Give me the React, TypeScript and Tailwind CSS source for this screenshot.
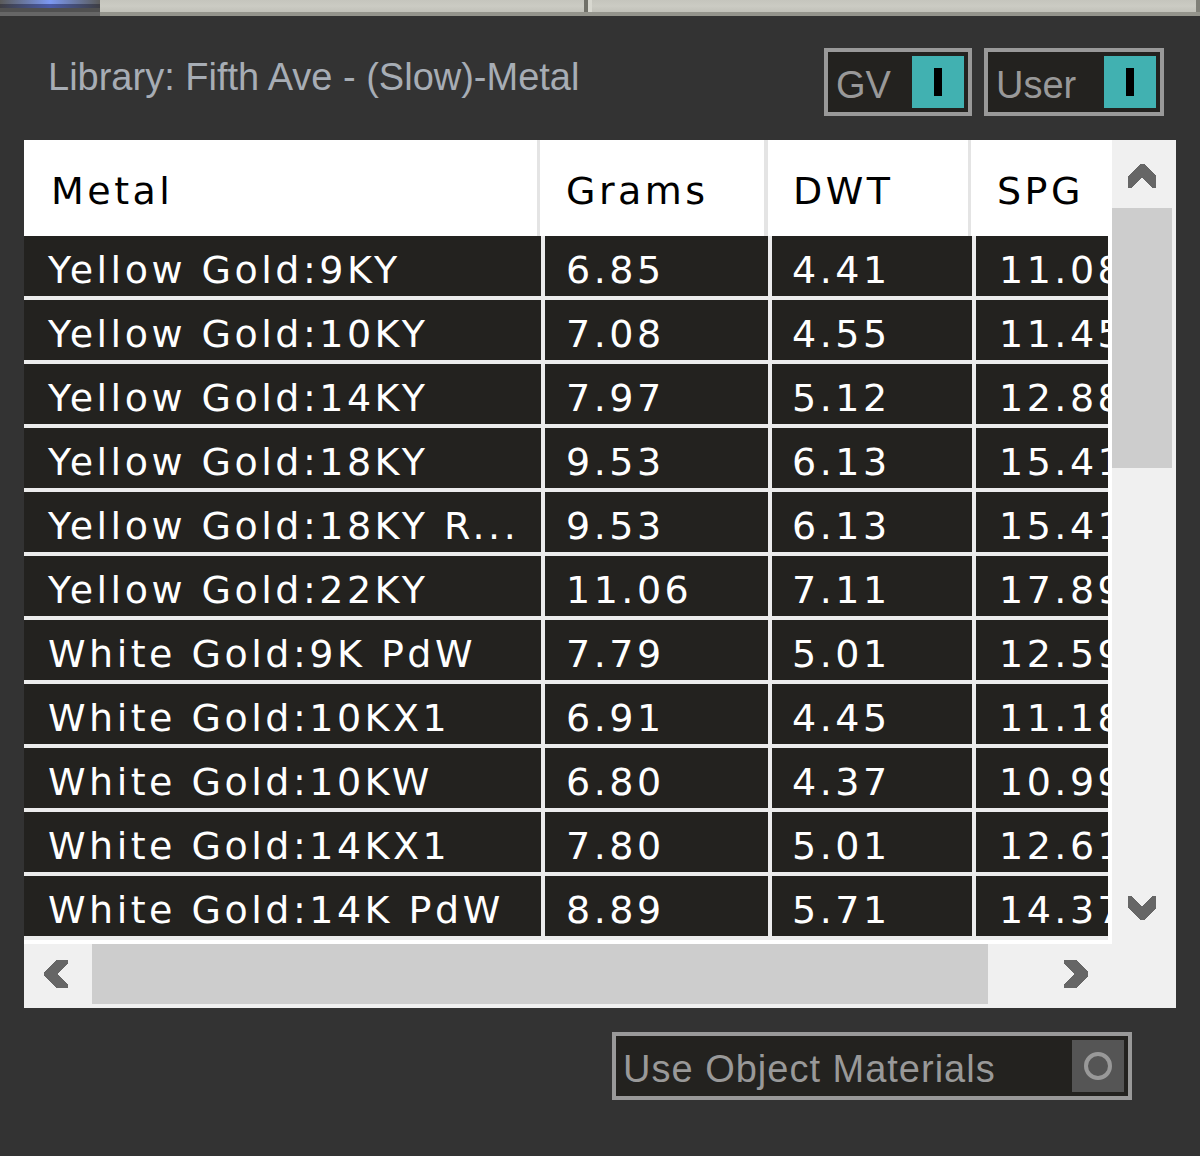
import React from "react";

const rows: [string, string, string, string][] = [
  ["Yellow Gold:9KY", "6.85", "4.41", "11.08"],
  ["Yellow Gold:10KY", "7.08", "4.55", "11.45"],
  ["Yellow Gold:14KY", "7.97", "5.12", "12.88"],
  ["Yellow Gold:18KY", "9.53", "6.13", "15.41"],
  ["Yellow Gold:18KY R...", "9.53", "6.13", "15.41"],
  ["Yellow Gold:22KY", "11.06", "7.11", "17.89"],
  ["White Gold:9K PdW", "7.79", "5.01", "12.59"],
  ["White Gold:10KX1", "6.91", "4.45", "11.18"],
  ["White Gold:10KW", "6.80", "4.37", "10.99"],
  ["White Gold:14KX1", "7.80", "5.01", "12.61"],
  ["White Gold:14K PdW", "8.89", "5.71", "14.37"],
];

const tableFont = { fontFamily: '"DejaVu Sans", Verdana, sans-serif' };
const uiFont = { fontFamily: '"Liberation Sans", Arial, sans-serif' };

function Toggle({ label, width }: { label: string; width: string }) {
  return (
    <div className={`${width} h-[68px] border-[4px] border-[#999999] bg-[#23221f] flex items-center justify-between p-[4px]`}>
      <span className="pl-[4px] pt-[6px] text-[38px] leading-[42px] text-[#999999]" style={uiFont}>
        {label}
      </span>
      <div className="w-[52px] h-[52px] bg-[#41b1b1] flex items-center justify-center">
        <div className="w-[8px] h-[28px] bg-black" />
      </div>
    </div>
  );
}

function Arrow({ points, w, h }: { points: string; w: number; h: number }) {
  return (
    <svg width={w} height={h} viewBox={`0 0 ${w} ${h}`} shapeRendering="crispEdges">
      <polygon points={points} fill="#666666" />
    </svg>
  );
}

export default function App() {
  const bodyPad = ["pl-[24px]", "pl-[21px]", "pl-[20px]", "pl-[23px]"];
  return (
    <div className="w-[1200px] h-[1156px] bg-[#333333] flex flex-col overflow-hidden">
      {/* top strip */}
      <div className="h-[16px] flex">
        <div className="w-[100px] h-[16px] flex flex-col">
          <div className="h-[4px] bg-gradient-to-r from-[#5a5a5a] via-[#7c98f2] to-[#5a5a5a]" />
          <div className="h-[4px] bg-gradient-to-r from-[#3e3e44] via-[#4a5aa8] to-[#3e3e44]" />
          <div className="h-[4px] bg-[#505050]" />
          <div className="h-[4px] bg-[#666666]" />
        </div>
        <div className="flex-1 flex flex-col">
          <div className="h-[12px] flex">
            <div className="w-[484px] bg-gradient-to-b from-[#c5c5bd] via-[#cbcbc3] to-[#c1c1b9]" />
            <div className="w-[4px] bg-[#707068]" />
            <div className="w-[4px] bg-[#d8d8d0]" />
            <div className="flex-1 bg-gradient-to-b from-[#c5c5bd] via-[#cbcbc3] to-[#c1c1b9]" />
            <div className="w-[4px] bg-[#808078]" />
          </div>
          <div className="h-[4px] bg-[#94948c]" />
        </div>
      </div>

      {/* label + toggles */}
      <div className="mt-[32px] h-[68px] flex items-start justify-between pl-[48px] pr-[36px]">
        <div className="pt-[8px] text-[38px] leading-[42px] text-[#a7adb5] whitespace-nowrap" style={uiFont}>
          Library: Fifth Ave - (Slow)-Metal
        </div>
        <div className="flex gap-[12px]">
          <Toggle label="GV" width="w-[148px]" />
          <Toggle label="User" width="w-[180px]" />
        </div>
      </div>

      {/* table */}
      <div className="mt-[24px] ml-[24px] w-[1152px] h-[868px] bg-[#f0f0f0] flex flex-col">
        <div className="h-[804px] flex">
          <div className="w-[1084px] overflow-hidden bg-white flex flex-col" style={tableFont}>
            <div className="h-[96px] shrink-0 grid grid-cols-[516px_228px_203px_200px] bg-white text-black text-[38px] tracking-[3.5px]">
              <div className="border-r-[3px] border-[#e4e4e4] pl-[27px] pt-[6px] leading-[90px]">Metal</div>
              <div className="border-r-[4px] border-[#e4e4e4] pl-[26px] pt-[6px] leading-[90px]">Grams</div>
              <div className="border-r-[3px] border-[#e4e4e4] pl-[25px] pt-[6px] leading-[90px]">DWT</div>
              <div className="pl-[26px] pt-[6px] leading-[90px]">SPG</div>
            </div>
            <div className="shrink-0 w-[1156px] grid grid-cols-[517px_223px_200px_200px] gap-[4px] bg-[#ececec]">
              {rows.map((r, i) =>
                r.map((c, j) => (
                  <div
                    key={`${i}-${j}`}
                    className={`h-[60px] bg-[#23221f] text-white text-[38px] tracking-[3.5px] whitespace-nowrap overflow-hidden pt-[8px] leading-[52px] ${bodyPad[j]}`}
                  >
                    {c}
                  </div>
                ))
              )}
            </div>
            <div className="h-[4px] shrink-0 bg-[#ececec]" />
            <div className="flex-1 bg-white" />
          </div>
          <div className="w-[4px] bg-white" />
          <div className="w-[64px] flex flex-col">
            <div className="pt-[24px] pl-[16px] h-[48px]">
              <Arrow w={28} h={24} points="12,0 16,0 28,12 28,24 24,24 14,13 4,24 0,24 0,12" />
            </div>
            <div className="mt-[20px] w-[60px] h-[260px] bg-[#cdcdcd]" />
            <div className="flex-1" />
            <div className="pl-[16px] pb-[24px]">
              <Arrow w={28} h={24} points="0,0 4,0 14,11 24,0 28,0 28,12 16,24 12,24 0,12" />
            </div>
          </div>
        </div>
        <div className="h-[60px] flex items-center">
          <div className="ml-[20px] w-[24px] h-[28px]">
            <Arrow w={24} h={28} points="0,12 12,0 24,0 24,4 13,14 24,24 24,28 12,28 0,16" />
          </div>
          <div className="ml-[24px] w-[896px] h-[60px] bg-[#cdcdcd]" />
          <div className="ml-[76px] w-[24px] h-[28px]">
            <Arrow w={24} h={28} points="24,12 12,0 0,0 0,4 11,14 0,24 0,28 12,28 24,16" />
          </div>
        </div>
      </div>

      {/* bottom toggle */}
      <div className="mt-[24px] ml-[612px] w-[520px] h-[68px] border-[4px] border-[#999999] bg-[#23221f] flex items-center justify-between p-[4px]">
        <span className="pl-[3px] pt-[6px] text-[38px] leading-[42px] tracking-[1px] text-[#999999] whitespace-nowrap" style={uiFont}>
          Use Object Materials
        </span>
        <div className="w-[52px] h-[52px] bg-[#555555] flex items-center justify-center">
          <div className="w-[28px] h-[28px] rounded-full border-[4px] border-[#999999]" />
        </div>
      </div>
    </div>
  );
}
